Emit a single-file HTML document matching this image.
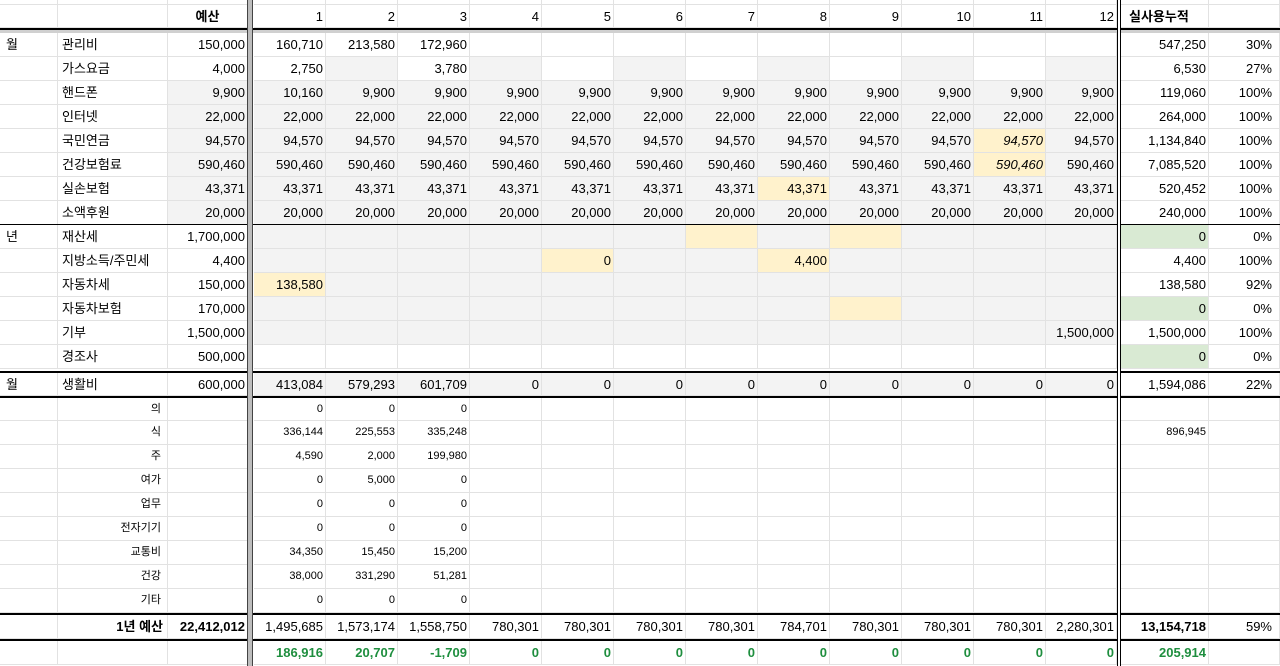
<!DOCTYPE html>
<html><head><meta charset="utf-8"><style>
*{margin:0;padding:0;box-sizing:border-box}
body{width:1280px;height:666px;overflow:hidden;background:#fff;position:relative;font-family:"Liberation Sans","Noto Sans CJK KR",sans-serif;font-size:13px;color:#000}
.r{position:absolute;left:0;width:1280px;height:24px;display:flex}
.r>span{height:100%;border-right:1px solid #e2e2e2;border-bottom:1px solid #e2e2e2;text-align:right;padding-right:2px;line-height:23px;white-space:nowrap;overflow:hidden}
.r>span:nth-child(1){width:58px;text-align:left;padding-left:6px}
.r>span:nth-child(2){width:110px;text-align:left;padding-left:4px}
.r>span:nth-child(3){width:80px}
.r>span:nth-child(4){width:6px;border:none}
.r>span:nth-child(n+5){width:72px}
.r>span:nth-child(16){width:71px}
.r>span:nth-child(17){width:4px;border:none}
.r>span:nth-child(18){width:88px}
.r>span:nth-child(19){width:71px;padding-right:7px}
.g{background:#f3f3f3}.y{background:#fff2cc}.gr{background:#d9ead3}.i{font-style:italic}
.s{font-size:11px}
.s>span:nth-child(2){text-align:right!important;padding-right:6px}
.b{font-weight:bold}
.gn>span{color:#1e8e3e;font-weight:bold}
.h{position:absolute;left:0;width:1280px;background:#000;height:2px}
.v{position:absolute;top:0;height:666px}
</style></head><body>
<div class="r" style="top:-19px"><span></span><span></span><span></span><span></span><span></span><span></span><span></span><span></span><span></span><span></span><span></span><span></span><span></span><span></span><span></span><span></span><span></span><span></span><span></span></div>
<div class="r b" style="top:5px;height:23px"><span></span><span></span><span style="text-align:center;padding:0">예산</span><span></span><span style="font-weight:normal">1</span><span style="font-weight:normal">2</span><span style="font-weight:normal">3</span><span style="font-weight:normal">4</span><span style="font-weight:normal">5</span><span style="font-weight:normal">6</span><span style="font-weight:normal">7</span><span style="font-weight:normal">8</span><span style="font-weight:normal">9</span><span style="font-weight:normal">10</span><span style="font-weight:normal">11</span><span style="font-weight:normal">12</span><span></span><span style="text-align:left;padding-left:8px">실사용누적</span><span></span></div>
<div class="h" style="top:28px"></div>
<div style="position:absolute;top:30px;left:0;width:1280px;height:3px;background:#d0d0d0"></div>

<div class="r" style="top:33px"><span>월</span><span>관리비</span><span>150,000</span><span></span><span>160,710</span><span>213,580</span><span>172,960</span><span></span><span></span><span></span><span></span><span></span><span></span><span></span><span></span><span></span><span></span><span>547,250</span><span>30%</span></div>
<div class="r" style="top:57px"><span></span><span>가스요금</span><span>4,000</span><span></span><span>2,750</span><span class="g"></span><span>3,780</span><span class="g"></span><span></span><span class="g"></span><span></span><span class="g"></span><span></span><span class="g"></span><span></span><span class="g"></span><span></span><span>6,530</span><span>27%</span></div>
<div class="r" style="top:81px"><span></span><span>핸드폰</span><span class="g">9,900</span><span></span><span class="g">10,160</span><span class="g">9,900</span><span class="g">9,900</span><span class="g">9,900</span><span class="g">9,900</span><span class="g">9,900</span><span class="g">9,900</span><span class="g">9,900</span><span class="g">9,900</span><span class="g">9,900</span><span class="g">9,900</span><span class="g">9,900</span><span></span><span>119,060</span><span>100%</span></div>
<div class="r" style="top:105px"><span></span><span>인터넷</span><span class="g">22,000</span><span></span><span class="g">22,000</span><span class="g">22,000</span><span class="g">22,000</span><span class="g">22,000</span><span class="g">22,000</span><span class="g">22,000</span><span class="g">22,000</span><span class="g">22,000</span><span class="g">22,000</span><span class="g">22,000</span><span class="g">22,000</span><span class="g">22,000</span><span></span><span>264,000</span><span>100%</span></div>
<div class="r" style="top:129px"><span></span><span>국민연금</span><span class="g">94,570</span><span></span><span class="g">94,570</span><span class="g">94,570</span><span class="g">94,570</span><span class="g">94,570</span><span class="g">94,570</span><span class="g">94,570</span><span class="g">94,570</span><span class="g">94,570</span><span class="g">94,570</span><span class="g">94,570</span><span class="y i">94,570</span><span class="g">94,570</span><span></span><span>1,134,840</span><span>100%</span></div>
<div class="r" style="top:153px"><span></span><span>건강보험료</span><span class="g">590,460</span><span></span><span class="g">590,460</span><span class="g">590,460</span><span class="g">590,460</span><span class="g">590,460</span><span class="g">590,460</span><span class="g">590,460</span><span class="g">590,460</span><span class="g">590,460</span><span class="g">590,460</span><span class="g">590,460</span><span class="y i">590,460</span><span class="g">590,460</span><span></span><span>7,085,520</span><span>100%</span></div>
<div class="r" style="top:177px"><span></span><span>실손보험</span><span class="g">43,371</span><span></span><span class="g">43,371</span><span class="g">43,371</span><span class="g">43,371</span><span class="g">43,371</span><span class="g">43,371</span><span class="g">43,371</span><span class="g">43,371</span><span class="y">43,371</span><span class="g">43,371</span><span class="g">43,371</span><span class="g">43,371</span><span class="g">43,371</span><span></span><span>520,452</span><span>100%</span></div>
<div class="r" style="top:201px"><span></span><span>소액후원</span><span class="g">20,000</span><span></span><span class="g">20,000</span><span class="g">20,000</span><span class="g">20,000</span><span class="g">20,000</span><span class="g">20,000</span><span class="g">20,000</span><span class="g">20,000</span><span class="g">20,000</span><span class="g">20,000</span><span class="g">20,000</span><span class="g">20,000</span><span class="g">20,000</span><span></span><span>240,000</span><span>100%</span></div>
<div class="h" style="top:224px;height:1px"></div>
<div class="r" style="top:225px"><span>년</span><span>재산세</span><span>1,700,000</span><span></span><span class="g"></span><span class="g"></span><span class="g"></span><span class="g"></span><span class="g"></span><span class="g"></span><span class="y"></span><span class="g"></span><span class="y"></span><span class="g"></span><span class="g"></span><span class="g"></span><span></span><span class="gr">0</span><span>0%</span></div>
<div class="r" style="top:249px"><span></span><span>지방소득/주민세</span><span>4,400</span><span></span><span class="g"></span><span class="g"></span><span class="g"></span><span class="g"></span><span class="y">0</span><span class="g"></span><span class="g"></span><span class="y">4,400</span><span class="g"></span><span class="g"></span><span class="g"></span><span class="g"></span><span></span><span>4,400</span><span>100%</span></div>
<div class="r" style="top:273px"><span></span><span>자동차세</span><span>150,000</span><span></span><span class="y">138,580</span><span class="g"></span><span class="g"></span><span class="g"></span><span class="g"></span><span class="g"></span><span class="g"></span><span class="g"></span><span class="g"></span><span class="g"></span><span class="g"></span><span class="g"></span><span></span><span>138,580</span><span>92%</span></div>
<div class="r" style="top:297px"><span></span><span>자동차보험</span><span>170,000</span><span></span><span class="g"></span><span class="g"></span><span class="g"></span><span class="g"></span><span class="g"></span><span class="g"></span><span class="g"></span><span class="g"></span><span class="y"></span><span class="g"></span><span class="g"></span><span class="g"></span><span></span><span class="gr">0</span><span>0%</span></div>
<div class="r" style="top:321px"><span></span><span>기부</span><span>1,500,000</span><span></span><span class="g"></span><span class="g"></span><span class="g"></span><span class="g"></span><span class="g"></span><span class="g"></span><span class="g"></span><span class="g"></span><span class="g"></span><span class="g"></span><span class="g"></span><span class="g">1,500,000</span><span></span><span>1,500,000</span><span>100%</span></div>
<div class="r" style="top:345px"><span></span><span>경조사</span><span>500,000</span><span></span><span></span><span></span><span></span><span></span><span></span><span></span><span></span><span></span><span></span><span></span><span></span><span></span><span></span><span class="gr">0</span><span>0%</span></div>
<div class="h" style="top:371px"></div>
<div class="r" style="top:373px;height:23px"><span>월</span><span>생활비</span><span>600,000</span><span></span><span class="g">413,084</span><span class="g">579,293</span><span class="g">601,709</span><span class="g">0</span><span class="g">0</span><span class="g">0</span><span class="g">0</span><span class="g">0</span><span class="g">0</span><span class="g">0</span><span class="g">0</span><span class="g">0</span><span></span><span>1,594,086</span><span>22%</span></div>
<div class="h" style="top:396px"></div>
<div class="r s" style="top:398px;height:23px"><span></span><span>의</span><span></span><span></span><span>0</span><span>0</span><span>0</span><span></span><span></span><span></span><span></span><span></span><span></span><span></span><span></span><span></span><span></span><span></span><span></span></div>
<div class="r s" style="top:421px"><span></span><span>식</span><span></span><span></span><span>336,144</span><span>225,553</span><span>335,248</span><span></span><span></span><span></span><span></span><span></span><span></span><span></span><span></span><span></span><span></span><span>896,945</span><span></span></div>
<div class="r s" style="top:445px"><span></span><span>주</span><span></span><span></span><span>4,590</span><span>2,000</span><span>199,980</span><span></span><span></span><span></span><span></span><span></span><span></span><span></span><span></span><span></span><span></span><span></span><span></span></div>
<div class="r s" style="top:469px"><span></span><span>여가</span><span></span><span></span><span>0</span><span>5,000</span><span>0</span><span></span><span></span><span></span><span></span><span></span><span></span><span></span><span></span><span></span><span></span><span></span><span></span></div>
<div class="r s" style="top:493px"><span></span><span>업무</span><span></span><span></span><span>0</span><span>0</span><span>0</span><span></span><span></span><span></span><span></span><span></span><span></span><span></span><span></span><span></span><span></span><span></span><span></span></div>
<div class="r s" style="top:517px"><span></span><span>전자기기</span><span></span><span></span><span>0</span><span>0</span><span>0</span><span></span><span></span><span></span><span></span><span></span><span></span><span></span><span></span><span></span><span></span><span></span><span></span></div>
<div class="r s" style="top:541px"><span></span><span>교통비</span><span></span><span></span><span>34,350</span><span>15,450</span><span>15,200</span><span></span><span></span><span></span><span></span><span></span><span></span><span></span><span></span><span></span><span></span><span></span><span></span></div>
<div class="r s" style="top:565px"><span></span><span>건강</span><span></span><span></span><span>38,000</span><span>331,290</span><span>51,281</span><span></span><span></span><span></span><span></span><span></span><span></span><span></span><span></span><span></span><span></span><span></span><span></span></div>
<div class="r s" style="top:589px"><span></span><span>기타</span><span></span><span></span><span>0</span><span>0</span><span>0</span><span></span><span></span><span></span><span></span><span></span><span></span><span></span><span></span><span></span><span></span><span></span><span></span></div>
<div class="h" style="top:613px"></div>
<div class="r" style="top:615px;height:24px"><span></span><span class="b" style="text-align:right;padding-right:4px">1년 예산</span><span class="b">22,412,012</span><span></span><span>1,495,685</span><span>1,573,174</span><span>1,558,750</span><span>780,301</span><span>780,301</span><span>780,301</span><span>780,301</span><span>784,701</span><span>780,301</span><span>780,301</span><span>780,301</span><span>2,280,301</span><span></span><span class="b">13,154,718</span><span>59%</span></div>
<div class="h" style="top:639px"></div>
<div class="r gn" style="top:641px"><span></span><span></span><span></span><span></span><span>186,916</span><span>20,707</span><span>-1,709</span><span>0</span><span>0</span><span>0</span><span>0</span><span>0</span><span>0</span><span>0</span><span>0</span><span>0</span><span></span><span>205,914</span><span></span></div>

<div class="v" style="left:247px;width:1px;background:#444"></div>
<div class="v" style="left:248px;width:4px;background:#bdbdbd"></div>
<div class="v" style="left:252px;width:1px;background:#444"></div>
<div class="v" style="left:1117px;width:1px;background:#000"></div>
<div class="v" style="left:1118px;width:2px;background:#fff"></div>
<div class="v" style="left:1120px;width:1px;background:#000"></div>
</body></html>
